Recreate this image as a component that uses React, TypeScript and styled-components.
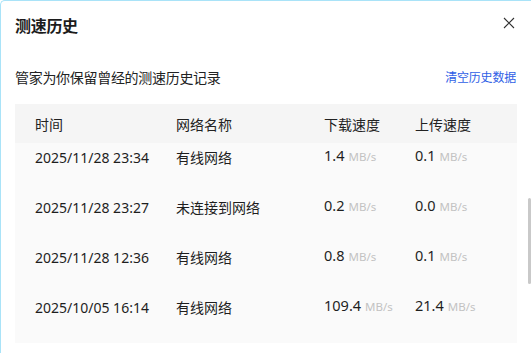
import styled, { createGlobalStyle } from 'styled-components';

const GlobalStyle = createGlobalStyle`
  html, body {
    margin: 0;
    padding: 0;
    background: #ffffff;
  }
  body {
    font-family: "Noto Sans", "Noto Sans CJK SC", sans-serif;
    color: #222222;
  }
`;

const Window = styled.div`
  position: relative;
  width: 531px;
  height: 353px;
  box-sizing: border-box;
  border-top: 1px solid #a9e3f8;
  border-left: 1px solid #a9e3f8;
  border-top-left-radius: 5px;
  background: #ffffff;
  overflow: hidden;
  display: flex;
  flex-direction: column;
`;

const TitleBar = styled.div`
  height: 48px;
  display: flex;
  align-items: center;
  justify-content: space-between;
  padding: 0 14px 0 14px;
`;

const Title = styled.h1`
  margin: 0;
  font-size: 16px;
  font-weight: 700;
  color: #1c1c1c;
  letter-spacing: -0.3px;
`;

const CloseButton = styled.button`
  width: 16px;
  height: 16px;
  margin-top: -4px;
  padding: 0;
  border: none;
  background: transparent;
  display: flex;
  align-items: center;
  justify-content: center;
  cursor: pointer;
`;

const InfoRow = styled.div`
  height: 55px;
  display: flex;
  align-items: center;
  justify-content: space-between;
  padding: 0 15px 0 14px;
`;

const Subtitle = styled.div`
  font-family: "Noto Sans CJK SC", sans-serif;
  font-size: 14px;
  color: #222222;
  letter-spacing: -0.3px;
`;

const ClearLink = styled.a`
  font-family: "Noto Sans CJK SC", sans-serif;
  font-size: 12px;
  color: #2f5fe6;
  cursor: pointer;
  letter-spacing: -0.2px;
`;

const Table = styled.div`
  margin-left: 14px;
  width: 502px;
  height: 239px;
  display: flex;
  flex-direction: column;
  background: #fafafa;
  overflow: hidden;
`;

const Columns = styled.div<{ $height: number }>`
  display: grid;
  grid-template-columns: 141px 148px 91px 1fr;
  align-items: center;
  height: ${p => p.$height}px;
  padding-left: 20px;
  flex-shrink: 0;
`;

const HeaderRow = styled(Columns)`
  position: relative;
  z-index: 1;
  background: #f5f5f5;
  font-size: 14px;
  color: #222222;
`;

const Body = styled.div`
  flex: 1;
  overflow: hidden;
`;

const ScrollContent = styled.div`
  margin-top: -11px;
`;

const Cell = styled.div`
  font-size: 14px;
  color: #1e1e1e;
  white-space: nowrap;
`;

const SpeedCell = styled.div`
  white-space: nowrap;
  margin-top: -4px;
`;

const Value = styled.span`
  font-size: 14.5px;
  color: #1e1e1e;
`;

const Unit = styled.span`
  font-size: 11.5px;
  color: #c2c2c2;
  margin-left: 4px;
`;

const ScrollThumb = styled.div`
  position: absolute;
  right: 0;
  top: 197px;
  width: 3px;
  height: 86px;
  border-radius: 2px;
  background: #c9c9c9;
`;

const records = [
  { time: '2025/11/28 23:34', net: '有线网络', down: '1.4', up: '0.1' },
  { time: '2025/11/28 23:27', net: '未连接到网络', down: '0.2', up: '0.0' },
  { time: '2025/11/28 12:36', net: '有线网络', down: '0.8', up: '0.1' },
  { time: '2025/10/05 16:14', net: '有线网络', down: '109.4', up: '21.4' },
];

export default function App() {
  return (
    <>
      <GlobalStyle />
      <Window>
        <TitleBar>
          <Title>测速历史</Title>
          <CloseButton aria-label="关闭">
            <svg width="12" height="12" viewBox="0 0 12 12">
              <path d="M1 1 L11 11 M11 1 L1 11" stroke="#333" strokeWidth="1.1" fill="none" />
            </svg>
          </CloseButton>
        </TitleBar>
        <InfoRow>
          <Subtitle>管家为你保留曾经的测速历史记录</Subtitle>
          <ClearLink>清空历史数据</ClearLink>
        </InfoRow>
        <Table>
          <HeaderRow $height={39}>
            <div>时间</div>
            <div>网络名称</div>
            <div>下载速度</div>
            <div>上传速度</div>
          </HeaderRow>
          <Body>
            <ScrollContent>
              {records.map(r => (
                <Columns $height={50} key={r.time}>
                  <Cell>{r.time}</Cell>
                  <Cell>{r.net}</Cell>
                  <SpeedCell>
                    <Value>{r.down}</Value>
                    <Unit>MB/s</Unit>
                  </SpeedCell>
                  <SpeedCell>
                    <Value>{r.up}</Value>
                    <Unit>MB/s</Unit>
                  </SpeedCell>
                </Columns>
              ))}
            </ScrollContent>
          </Body>
        </Table>
        <ScrollThumb />
      </Window>
    </>
  );
}
